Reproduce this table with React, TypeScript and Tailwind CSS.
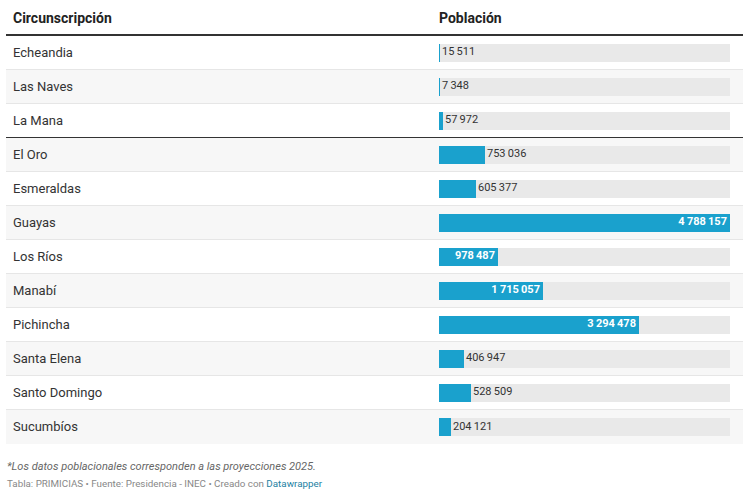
import React from 'react';

type Row = { name: string; value: number };

const GROUP_A: Row[] = [
    { name: 'Echeandia', value: 15511 },
    { name: 'Las Naves', value: 7348 },
    { name: 'La Mana', value: 57972 },
];

const GROUP_B: Row[] = [
    { name: 'El Oro', value: 753036 },
    { name: 'Esmeraldas', value: 605377 },
    { name: 'Guayas', value: 4788157 },
    { name: 'Los Ríos', value: 978487 },
    { name: 'Manabí', value: 1715057 },
    { name: 'Pichincha', value: 3294478 },
    { name: 'Santa Elena', value: 406947 },
    { name: 'Santo Domingo', value: 528509 },
    { name: 'Sucumbíos', value: 204121 },
];

const MAX = 4788157;
const TRACK = 291;

const fmt = (n: number) => n.toString().replace(/\B(?=(\d{3})+(?!\d))/g, '\u2009');

const TableRow: React.FC<{ row: Row; index: number; border: 'dark' | 'light' | 'none' }> = ({ row, index, border }) => {
    const w = Math.max(1, Math.round((row.value / MAX) * TRACK));
    const inside = w > 55;
    const borderCls =
        border === 'dark' ? 'border-b border-[#333]' : border === 'light' ? 'border-b border-[#e6e6e6]' : '';
    return (
        <div className={`flex items-center h-[34px] ${index % 2 === 1 ? 'bg-[#f7f7f7]' : 'bg-white'} ${borderCls}`}>
            <div className="w-[433px] pl-[7px] text-[13px] text-[#333]">{row.name}</div>
            <div className="relative w-[291px] h-[18px] bg-[#e9e9e9]">
                <div className="absolute left-0 top-0 h-full bg-[#1aa1cd]" style={{ width: w }} />
                {inside ? (
                    <span
                        className="absolute top-0 h-full flex items-center justify-end pr-[3px] text-[11px] font-bold text-white"
                        style={{ width: w }}
                    >
                        {fmt(row.value)}
                    </span>
                ) : (
                    <span
                        className="absolute top-0 h-full flex items-center text-[11px] text-[#333]"
                        style={{ left: w + 2 }}
                    >
                        {fmt(row.value)}
                    </span>
                )}
            </div>
        </div>
    );
};

export default function App() {
    const all = [...GROUP_A, ...GROUP_B];
    return (
        <div className="w-[749px] h-[495px] bg-white px-[6px] font-['Roboto',sans-serif]">
            {/* Header */}
            <div className="flex items-end h-[36px] pb-[5px] border-b-2 border-[#333] text-[14px] font-bold text-[#222]">
                <div className="w-[433px] pl-[7px]">Circunscripción</div>
                <div>Población</div>
            </div>

            {all.map((r, i) => (
                <TableRow
                    key={r.name}
                    row={r}
                    index={i}
                    border={i === GROUP_A.length - 1 ? 'dark' : i === all.length - 1 ? 'none' : 'light'}
                />
            ))}

            {/* Footer */}
            <div className="pt-[15px] pl-[1px]">
                <p className="text-[11px] italic text-[#666] leading-[16px]">
                    *Los datos poblacionales corresponden a las proyecciones 2025.
                </p>
                <p className="text-[9.8px] text-[#888] leading-[16px] mt-[1px]">
                    Tabla: PRIMICIAS • Fuente: Presidencia - INEC • Creado con{' '}
                    <span className="text-[#1d81a2]">Datawrapper</span>
                </p>
            </div>
        </div>
    );
}
